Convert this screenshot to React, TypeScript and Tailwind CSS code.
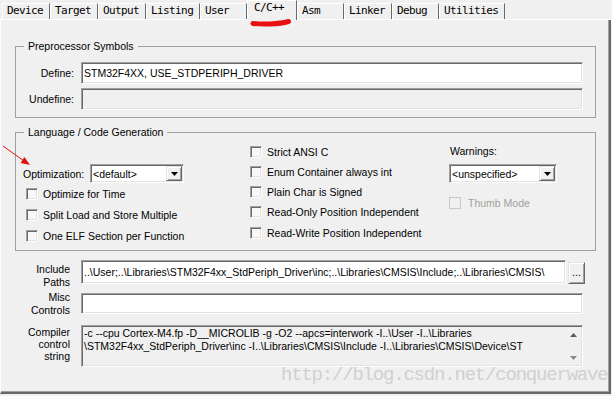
import React from "react";

const SUNKEN =
  "border border-t-[#a0a0a0] border-l-[#a0a0a0] border-b-white border-r-white shadow-[inset_1px_1px_0_#696969,inset_-1px_-1px_0_#e3e3e3]";
const RAISED =
  "border border-t-[#e3e3e3] border-l-[#e3e3e3] border-b-[#696969] border-r-[#696969] shadow-[inset_1px_1px_0_#ffffff,inset_-1px_-1px_0_#a0a0a0] bg-[#f0f0f0]";

type TabDef = { label: string; cls: string; active?: boolean };

const TABS: TabDef[] = [
  { label: "Device", cls: "w-[48px]" },
  { label: "Target", cls: "w-[48px]" },
  { label: "Output", cls: "w-[48px]" },
  { label: "Listing", cls: "w-[54px]" },
  { label: "User", cls: "w-[47px]" },
  { label: "C/C++", cls: "w-[50px]", active: true },
  { label: "Asm", cls: "w-[47px]" },
  { label: "Linker", cls: "w-[48px]" },
  { label: "Debug", cls: "w-[47px]" },
  { label: "Utilities", cls: "w-[66px]" },
];

function Tab({ t }: { t: TabDef }) {
  if (t.active) {
    return (
      <div
        className={`${t.cls} h-[20px] -mb-px bg-[#f0f0f0] border-l border-t border-white border-r border-r-[#696969] pl-[6px] leading-[14px] relative`}
      >
        {t.label}
      </div>
    );
  }
  return (
    <div
      className={`${t.cls} h-[16px] border-l border-t border-white border-r border-r-[#696969] pl-[4px] leading-[14px]`}
    >
      {t.label}
    </div>
  );
}

function Check({ label, disabled }: { label: string; disabled?: boolean }) {
  return (
    <div className="flex items-center">
      <div
        className={
          disabled
            ? "w-[12px] h-[12px] border border-[#c8c8c8] bg-[#f0f0f0]"
            : `w-[12px] h-[12px] ${SUNKEN} bg-[#f8f8f8]`
        }
      />
      <span
        className={
          disabled
            ? "ml-[7px] leading-[14px] text-[#a0a0a0]"
            : "ml-[5px] leading-[14px]"
        }
      >
        {label}
      </span>
    </div>
  );
}

function DownTri({ color }: { color: string }) {
  return (
    <svg width="7" height="4" viewBox="0 0 7 4">
      <polygon points="0,0 7,0 3.5,4" fill={color} />
    </svg>
  );
}

function UpTri({ color }: { color: string }) {
  return (
    <svg width="7" height="4" viewBox="0 0 7 4">
      <polygon points="0,4 7,4 3.5,0" fill={color} />
    </svg>
  );
}

function Combo({ text, wide }: { text: string; wide?: boolean }) {
  return (
    <div
      className={`${wide ? "w-[108px]" : "w-[94px]"} h-[19px] bg-white ${SUNKEN} flex items-stretch p-[1px]`}
    >
      <div className="flex-1 pl-[1px] flex items-center leading-[14px]">
        {text}
      </div>
      <div className={`w-[16px] ${RAISED} flex items-center justify-center`}>
        <DownTri color="#000" />
      </div>
    </div>
  );
}

export default function App() {
  return (
    <div className="relative w-[612px] h-[396px] overflow-hidden bg-[#f0f0f0] font-['Liberation_Sans',Arial,sans-serif] text-[10.5px] text-black">
      {/* tab strip */}
      <div className="flex items-end h-[20px] pl-[2px] border-b border-white font-['DejaVu_Sans_Mono',monospace] text-[11px] tracking-[-0.6px]">
        {TABS.map((t) => (
          <Tab key={t.label} t={t} />
        ))}
      </div>

      {/* panel */}
      <div className="w-[611px] h-[374px] border-l border-white border-r-2 border-r-[#696969] border-b-2 border-b-[#696969] shadow-[inset_-1px_-1px_0_#a0a0a0] pl-[14px] pt-[19px]">
        {/* Preprocessor Symbols */}
        <fieldset className="w-[581px] h-[79px] border border-[#a0a0a0]">
          <legend className="ml-[8px] px-[4px] leading-[14px]">
            Preprocessor Symbols
          </legend>
          <div className="flex items-center h-[22px] mt-[9px]">
            <div className="w-[58px] text-right leading-[14px]">Define:</div>
            <div
              className={`ml-[7px] w-[502px] h-[22px] bg-white ${SUNKEN} flex items-center pl-[2px] leading-[14px] whitespace-nowrap overflow-hidden`}
            >
              STM32F4XX, USE_STDPERIPH_DRIVER
            </div>
          </div>
          <div className="flex items-center h-[22px] mt-[4px]">
            <div className="w-[58px] text-right leading-[14px]">Undefine:</div>
            <div
              className={`ml-[7px] w-[502px] h-[22px] bg-[#f0f0f0] ${SUNKEN}`}
            />
          </div>
        </fieldset>

        {/* Language / Code Generation */}
        <fieldset className="mt-[7px] w-[581px] h-[126px] border border-[#a0a0a0]">
          <legend className="ml-[8px] px-[4px] leading-[14px]">
            Language / Code Generation
          </legend>
          <div className="flex items-start">
            <div className="w-[234px] pl-[7px]">
              <div className="flex items-center h-[19px] mt-[25px]">
                <div className="w-[67px] leading-[14px]">Optimization:</div>
                <Combo text="<default>" />
              </div>
              <div className="pl-[3px]">
                <div className="h-[21px] flex items-center">
                  <Check label="Optimize for Time" />
                </div>
                <div className="h-[21px] flex items-center">
                  <Check label="Split Load and Store Multiple" />
                </div>
                <div className="h-[21px] flex items-center">
                  <Check label="One ELF Section per Function" />
                </div>
              </div>
            </div>
            <div className="w-[199px] pt-[3px]">
              <div className="h-[20px] flex items-center">
                <Check label="Strict ANSI C" />
              </div>
              <div className="h-[20px] flex items-center">
                <Check label="Enum Container always int" />
              </div>
              <div className="h-[20px] flex items-center">
                <Check label="Plain Char is Signed" />
              </div>
              <div className="h-[20px] flex items-center">
                <Check label="Read-Only Position Independent" />
              </div>
              <div className="h-[21px] flex items-center">
                <Check label="Read-Write Position Independent" />
              </div>
            </div>
            <div className="w-[146px] pt-[5px]">
              <div className="pl-[1px] leading-[14px]">Warnings:</div>
              <div className="mt-[6px]">
                <Combo text="<unspecified>" wide />
              </div>
              <div className="mt-[13px] h-[13px] flex items-center">
                <Check label="Thumb Mode" disabled />
              </div>
            </div>
          </div>
        </fieldset>

        {/* Include Paths */}
        <div className="flex items-start h-[24px] mt-[9px]">
          <div className="w-[55px] text-right leading-[13px] pt-[3px]">
            Include
            <br />
            Paths
          </div>
          <div
            className={`ml-[11px] w-[485px] h-[24px] bg-white ${SUNKEN} flex items-center pl-[2px] overflow-hidden whitespace-nowrap leading-[14px]`}
          >
            ..\User;..\Libraries\STM32F4xx_StdPeriph_Driver\inc;..\Libraries\CMSIS\Include;..\Libraries\CMSIS\
          </div>
          <div
            className={`ml-[2px] mt-[2px] w-[17px] h-[22px] ${RAISED} flex items-center justify-center leading-[14px] pb-[2px]`}
          >
            ...
          </div>
        </div>

        {/* Misc Controls */}
        <div className="flex items-start h-[21px] mt-[9px]">
          <div className="w-[55px] text-right leading-[13px] -mt-[2px]">
            Misc
            <br />
            Controls
          </div>
          <div className={`ml-[11px] w-[502px] h-[21px] bg-white ${SUNKEN}`} />
        </div>

        {/* Compiler control string */}
        <div className="flex items-start h-[42px] mt-[11px]">
          <div className="w-[55px] text-right leading-[12px] pt-[1px]">
            Compiler
            <br />
            control
            <br />
            string
          </div>
          <div
            className={`ml-[11px] w-[502px] h-[42px] bg-[#f0f0f0] ${SUNKEN} flex`}
          >
            <div className="flex-1 pl-[2px] pt-[1px] leading-[13px] whitespace-nowrap overflow-hidden">
              <div>
                -c --cpu Cortex-M4.fp -D__MICROLIB -g -O2 --apcs=interwork -I..\User -I..\Libraries
              </div>
              <div>
                \STM32F4xx_StdPeriph_Driver\inc -I..\Libraries\CMSIS\Include -I..\Libraries\CMSIS\Device\ST
              </div>
            </div>
            <div className="w-[17px] flex flex-col justify-between">
              <div className="h-[17px] flex items-center justify-center">
                <UpTri color="#5a5a5a" />
              </div>
              <div className="h-[17px] flex items-center justify-center">
                <DownTri color="#8a8a8a" />
              </div>
            </div>
          </div>
        </div>
      </div>

      {/* watermark */}
      <div className="absolute left-[281px] top-[365px] font-['Liberation_Mono',monospace] text-[19px] tracking-[-1.2px] leading-[20px] text-[#d0d0d0] whitespace-nowrap pointer-events-none">
        http://blog.csdn.net/conquerwave
      </div>

      {/* red annotations */}
      <svg
        className="absolute left-0 top-0 pointer-events-none"
        width="612"
        height="396"
        viewBox="0 0 612 396"
      >
        <path
          d="M253 23.5 C 262 24.5, 278 24.5, 288.5 21.5"
          stroke="#e81010"
          strokeWidth="5"
          strokeLinecap="round"
          fill="none"
        />
        <line x1="3" y1="146" x2="24" y2="161" stroke="#e01010" strokeWidth="1" />
        <polygon points="30,165 20.6,162.9 24.4,157.1" fill="#e01010" />
      </svg>
    </div>
  );
}
